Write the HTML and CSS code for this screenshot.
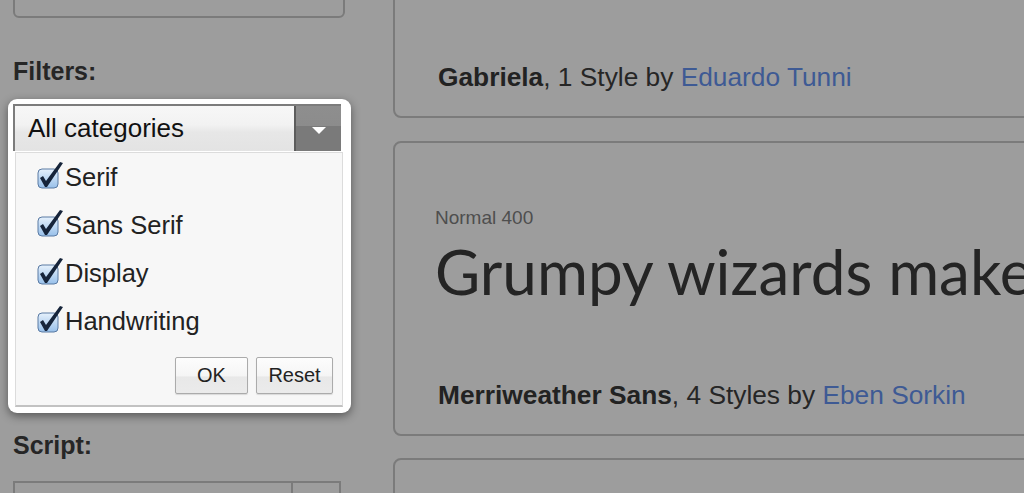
FILE: index.html
```html
<!DOCTYPE html>
<html lang="en">
<head>
    <meta charset="UTF-8" />
    <title>Fonts</title>
    <link rel="stylesheet" href="styles.css">
</head>
<body>
    <div id="wrap">
        <aside class="sidebar">
            <div class="search-box"></div>
            <h3 class="side-label">Filters:</h3>
            <div class="dropdown">
                <div class="select-head">
                    <span class="select-value">All categories</span>
                    <span class="select-btn"><i class="arrow"></i></span>
                </div>
                <div class="select-menu">
                    <label class="option">
                        <svg class="check" viewBox="0 0 28 28" width="28" height="28"><rect x="1" y="8" width="20" height="19" rx="4" fill="url(#cb)" stroke="#5a7aa3"/><defs><linearGradient id="cb" x1="0" y1="0" x2="0" y2="1"><stop offset="0" stop-color="#e6f1fc"/><stop offset="1" stop-color="#98c0ea"/></linearGradient></defs><path d="M3 17 L6 15 L9 20 L23 1 L26 2 L10 26 L8 26 Z" fill="#16243a"/></svg>
                        Serif
                    </label>
                    <label class="option">
                        <svg class="check" viewBox="0 0 28 28" width="28" height="28"><rect x="1" y="8" width="20" height="19" rx="4" fill="url(#cb)" stroke="#5a7aa3"/><path d="M3 17 L6 15 L9 20 L23 1 L26 2 L10 26 L8 26 Z" fill="#16243a"/></svg>
                        Sans Serif
                    </label>
                    <label class="option">
                        <svg class="check" viewBox="0 0 28 28" width="28" height="28"><rect x="1" y="8" width="20" height="19" rx="4" fill="url(#cb)" stroke="#5a7aa3"/><path d="M3 17 L6 15 L9 20 L23 1 L26 2 L10 26 L8 26 Z" fill="#16243a"/></svg>
                        Display
                    </label>
                    <label class="option">
                        <svg class="check" viewBox="0 0 28 28" width="28" height="28"><rect x="1" y="8" width="20" height="19" rx="4" fill="url(#cb)" stroke="#5a7aa3"/><path d="M3 17 L6 15 L9 20 L23 1 L26 2 L10 26 L8 26 Z" fill="#16243a"/></svg>
                        Handwriting
                    </label>
                    <div class="menu-actions">
                        <button class="btn btn-ok">OK</button>
                        <button class="btn btn-reset">Reset</button>
                    </div>
                </div>
            </div>
            <h3 class="side-label script-label">Script:</h3>
            <div class="select-closed">
                <span class="closed-value">Latin</span>
                <span class="closed-btn"></span>
            </div>
        </aside>
        <main class="results">
            <div class="card card-first">
                <p class="credit"><b>Gabriela</b>, 1 Style by <a href="javascript:;">Eduardo Tunni</a></p>
            </div>
            <div class="card card-sample">
                <p class="meta">Normal 400</p>
                <p class="sample">Grumpy wizards make toxic brew</p>
                <p class="credit"><b>Merriweather Sans</b>, 4 Styles by <a href="javascript:;">Eben Sorkin</a></p>
            </div>
            <div class="card card-next"></div>
        </main>
    </div>
</body>
</html>
```

FILE: styles.css
```css
html,body{
    margin: 0;
    padding: 0;
    height: 100%;
    overflow: hidden;
}
body{
    background: #9d9d9d;
    font-family: "Liberation Sans", Arial, sans-serif;
    color: #262626;
}
#wrap{
    display: flex;
    align-items: flex-start;
    height: 493px;
    overflow: hidden;
}
.sidebar{
    width: 332px;
    padding-left: 13px;
    flex: none;
    display: flex;
    flex-direction: column;
}
.search-box{
    height: 40px;
    margin-top: -22px;
    border: 2px solid #7b7b7b;
    border-radius: 6px;
    box-sizing: border-box;
}
.side-label{
    margin: 38px 0 0;
    font-size: 25px;
    line-height: 30px;
    font-weight: bold;
    color: #262626;
}
.dropdown{
    position: relative;
    z-index: 2;
    width: 343px;
    margin: 13px 0 0 -5px;
    padding: 5px 5px 6px;
    box-sizing: border-box;
    background: #fff;
    border-radius: 9px;
    box-shadow: 0 3px 10px rgba(0,0,0,.45);
}
.select-head{
    width: 328px;
    height: 47px;
    box-sizing: border-box;
    display: flex;
    border-top: 2px solid #7c7c7c;
    border-left: 2px solid #7c7c7c;
    background: linear-gradient(#f7f7f7 0, #f2f2f2 42%, #e7e7e7 58%, #e3e3e3 100%);
}
.select-value{
    flex: 1;
    display: flex;
    align-items: center;
    padding-left: 13px;
    font-size: 26px;
    color: #111;
}
.select-btn{
    width: 45px;
    border-left: 2px solid #5c5c5c;
    background: linear-gradient(#8e8e8e 0, #8c8c8c 45%, #7a7a7a 45%, #7a7a7a 100%);
    display: flex;
    align-items: center;
    justify-content: center;
}
.arrow{
    width: 0;
    height: 0;
    border-left: 7px solid transparent;
    border-right: 7px solid transparent;
    border-top: 7px solid #fff;
    margin-top: 3px;
}
.select-menu{
    width: 328px;
    margin: 1px 0 0 2px;
    box-sizing: border-box;
    background: #f7f7f7;
    border: 1px solid #dcdcdc;
    border-bottom: 2px solid #c2c2c2;
    padding: 0 9px 11px 21px;
}
.option{
    height: 48px;
    display: flex;
    align-items: center;
    font-size: 25.5px;
    color: #222;
}
.check{
    margin: -4px 0 0 0;
    flex: none;
}
.menu-actions{
    display: flex;
    justify-content: flex-end;
    gap: 8px;
    margin-top: 12px;
}
.btn{
    height: 37px;
    padding: 0;
    font-family: "Liberation Sans", Arial, sans-serif;
    font-size: 20px;
    color: #222;
    background: linear-gradient(#fdfdfd 0, #f5f5f5 50%, #e8e8e8 55%, #ebebeb 100%);
    border: 1px solid #ababab;
    border-radius: 2px;
    box-shadow: 0 1px 1px rgba(0,0,0,.12);
}
.btn-ok{
    width: 73px;
}
.btn-reset{
    width: 77px;
}
.script-label{
    margin-top: 17px;
}
.select-closed{
    width: 328px;
    height: 44px;
    margin-top: 21px;
    box-sizing: border-box;
    border: 2px solid #7b7b7b;
    display: flex;
}
.closed-value{
    flex: 1;
    padding: 8px 0 0 13px;
    font-size: 26px;
    color: #222;
}
.closed-btn{
    width: 46px;
    border-left: 2px solid #7b7b7b;
}
.results{
    flex: 1;
    margin: 0 -60px 0 48px;
    display: flex;
    flex-direction: column;
}
.card{
    border: 2px solid #7b7b7b;
    border-radius: 8px;
    box-sizing: border-box;
    padding: 0 0 24px 43px;
    display: flex;
    flex-direction: column;
}
.card-first{
    height: 158px;
    margin-top: -40px;
}
.card-sample{
    height: 295px;
    margin-top: 23px;
    padding-top: 63px;
}
.card-next{
    height: 80px;
    margin-top: 22px;
}
.credit{
    margin: auto 0 0;
    font-size: 26.3px;
    line-height: 30px;
    color: #262626;
}
.credit b{
    color: #222;
}
.credit a{
    color: #3e5a94;
    text-decoration: none;
}
.meta{
    margin: 0 0 0 -3px;
    font-size: 19px;
    line-height: 24px;
    color: #4e4e4e;
}
.sample{
    margin: 8px 0 0 -3px;
    font-family: Lato, "Noto Sans", sans-serif;
    font-size: 62px;
    line-height: 66px;
    white-space: nowrap;
    color: #242424;
}
```
